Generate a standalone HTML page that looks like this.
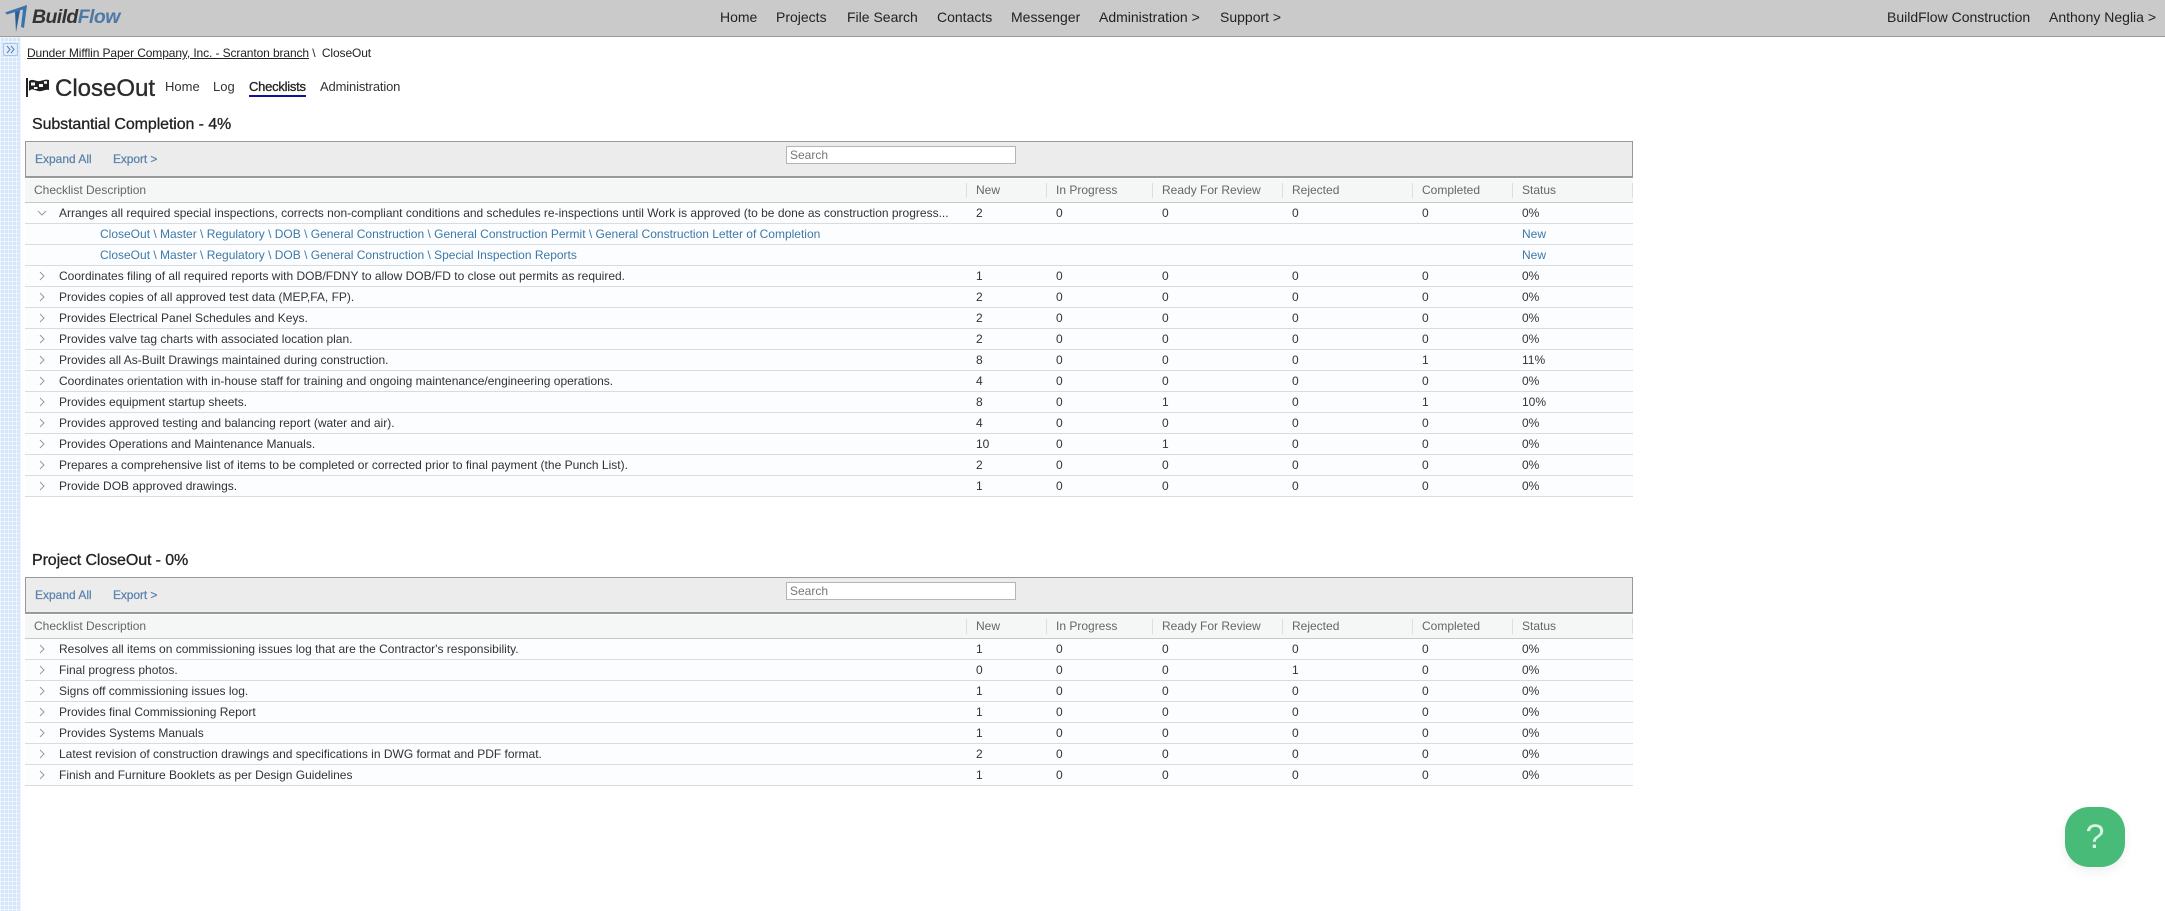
<!DOCTYPE html>
<html><head><meta charset="utf-8"><title>CloseOut</title>
<style>
html,body{margin:0;padding:0;width:2165px;height:911px;overflow:hidden;background:#fff;font-family:"Liberation Sans",Arial,sans-serif;color:#2e2e2e}
.abs,.n,.t{position:absolute;white-space:nowrap}
#top{position:absolute;left:0;top:0;width:2165px;height:36px;background:#cacaca;border-bottom:1px solid #9a9a9a}
.n{top:8px;font-size:14px;line-height:18px;color:#222}
#side{position:absolute;left:0;top:37px;width:21px;height:874px;background-color:#d6e6fa;background-image:linear-gradient(#eef5fe 1px,transparent 1px),linear-gradient(90deg,#eef5fe 1px,transparent 1px);background-size:4px 4px}
#btn{position:absolute;left:3px;top:43px;width:13px;height:11px;background:#e2eefc;border:1px solid #a9c4e6;border-radius:2px}
.sec{position:absolute;left:25px;width:1608px}
.title{position:absolute;left:7px;top:-26px;font-size:16px;line-height:20px;color:#222;white-space:nowrap;letter-spacing:-.1px;-webkit-text-stroke:.3px #222}
.bar{position:absolute;left:0;top:0;width:1606px;height:34px;background:#ececec;border:1px solid #999;border-bottom:2px solid #999}
.lnk{position:absolute;top:10px;font-size:12px;line-height:15px;color:#5b83ad;-webkit-text-stroke:.25px #5b83ad;white-space:nowrap}
.search{position:absolute;left:760px;top:4px;width:228px;height:16px;background:#fff;border:1px solid #b5b5b5;font-size:12px;line-height:16px;color:#777;text-indent:3px}
.head{position:absolute;left:0;top:38px;width:1608px;height:23px;background:#f5f6f6;border-bottom:1px solid #c4c8ca;font-size:12px;color:#666;line-height:23px}
.head i{position:absolute;top:4px;width:1px;height:15px;background:#dcdfe1}
.row{position:absolute;left:0;width:1608px;height:20px;border-bottom:1px solid #d6dde2;background:#fcfdfe;font-size:12px;line-height:21px;color:#333}
.row span{position:absolute;top:0;white-space:nowrap}
.h{left:9px}
.row .d{left:34px}
.row .a,.head .a{left:951px}
.row .b,.head .b{left:1031px}
.row .c,.head .c{left:1137px}
.row .e,.head .e{left:1267px}
.row .f,.head .f{left:1397px}
.row .g,.head .g{left:1497px}
.head span{position:absolute;top:0;white-space:nowrap}
.row .l{left:75px;color:#3d79a8}
.row .g.s{color:#3d79a8}
.row svg{position:absolute;left:12px;top:5px}
.row svg path{fill:none;stroke:#999}
#help{position:absolute;left:2065px;top:807px;width:60px;height:60px;background:#48bb78;border-radius:24px;box-shadow:0 4px 10px rgba(0,0,0,.07);color:#d8f5e3;font-size:34px;line-height:60px;text-align:center}
</style></head><body>

<div id="top"></div>
<svg class="abs" style="left:0;top:0" width="32" height="36" viewBox="0 0 32 36"><path d="M5 12.5 L27 5 L24 28 L21 27 L23 9.5 L7 14.5 Z" fill="#3a72ab"/><path d="M15 12 L20 10.5 L16 32 Z" fill="#2c5e96"/></svg>
<div class="abs" style="left:32px;top:4px;font-size:19.5px;line-height:26px;font-weight:bold;font-style:italic;color:#333;letter-spacing:-.6px">Build<span style="color:#4d79a8">Flow</span></div>
<div class="n" style="left:720px">Home</div>
<div class="n" style="left:776px">Projects</div>
<div class="n" style="left:847px">File Search</div>
<div class="n" style="left:937px">Contacts</div>
<div class="n" style="left:1011px">Messenger</div>
<div class="n" style="left:1099px">Administration &gt;</div>
<div class="n" style="left:1220px">Support &gt;</div>
<div class="n" style="left:1887px">BuildFlow Construction</div>
<div class="n" style="left:2049px">Anthony Neglia &gt;</div>

<div id="side"></div>
<div id="btn"><svg width="13" height="11" viewBox="0 0 13 11" style="display:block"><path d="M3 2l3 3.5L3 9M7 2l3 3.5L7 9" fill="none" stroke="#4f7fb8" stroke-width="1"/></svg></div>

<div class="abs" style="left:27px;top:45px;font-size:12px;line-height:16px;color:#222;letter-spacing:-.11px"><span style="text-decoration:underline">Dunder Mifflin Paper Company, Inc. - Scranton branch</span> \&nbsp; CloseOut</div>

<svg class="abs" style="left:22px;top:74px" width="34" height="30" viewBox="0 0 34 30"><path d="M5 4v19" stroke="#222" stroke-width="2"/><path d="M7 7C11 4 14 8 18 7S24 5 27 6L27 16C23 15 20 18 16 17S10 14 7 17Z" fill="#222"/><path d="M9 8.5h4v3H9zM17 10h4v3h-4zM12 13h3.5v2H12zM22 7.2h3v2.6h-3z" fill="#fff"/></svg>
<div class="abs" style="left:55px;top:73px;font-size:24px;line-height:32px;color:#2b2b2b;-webkit-text-stroke:.35px #2b2b2b">CloseOut</div>
<div class="abs" style="left:165px;top:79px;font-size:13px;line-height:16px;color:#333">Home</div>
<div class="abs" style="left:213px;top:79px;font-size:13px;line-height:16px;color:#333">Log</div>
<div class="abs" style="left:249px;top:79px;font-size:13px;line-height:16px;color:#222;letter-spacing:-.25px;-webkit-text-stroke:.3px #222;border-bottom:2px solid #10109a;padding-bottom:0">Checklists</div>
<div class="abs" style="left:320px;top:79px;font-size:13px;line-height:16px;color:#333;letter-spacing:-.15px">Administration</div>

<div class="sec" style="top:141px">
<div class="title">Substantial Completion - 4%</div>
<div class="bar"><div class="lnk" style="left:9px">Expand All</div><div class="lnk" style="left:87px;letter-spacing:-.1px">Export &gt;</div><div class="search">Search</div></div>
<div class="head"><span class="h">Checklist Description</span><i style="left:941px"></i><span class="a">New</span><i style="left:1021px"></i><span class="b">In Progress</span><i style="left:1127px"></i><span class="c">Ready For Review</span><i style="left:1257px"></i><span class="e">Rejected</span><i style="left:1387px"></i><span class="f">Completed</span><i style="left:1487px"></i><span class="g">Status</span><i style="left:1607px"></i></div>

<div class="row" style="top:62px"><svg width="10" height="10" viewBox="0 0 10 10"><path d="M1 3l4 4 4-4"/></svg><span class="d">Arranges all required special inspections, corrects non-compliant conditions and schedules re-inspections until Work is approved (to be done as construction progress...</span><span class="a">2</span><span class="b">0</span><span class="c">0</span><span class="e">0</span><span class="f">0</span><span class="g">0%</span></div>
<div class="row" style="top:83px"><span class="l">CloseOut \ Master \ Regulatory \ DOB \ General Construction \ General Construction Permit \ General Construction Letter of Completion</span><span class="g s">New</span></div>
<div class="row" style="top:104px"><span class="l">CloseOut \ Master \ Regulatory \ DOB \ General Construction \ Special Inspection Reports</span><span class="g s">New</span></div>
<div class="row" style="top:125px"><svg width="10" height="10" viewBox="0 0 10 10"><path d="M3 1l4 4-4 4"/></svg><span class="d">Coordinates filing of all required reports with DOB/FDNY to allow DOB/FD to close out permits as required.</span><span class="a">1</span><span class="b">0</span><span class="c">0</span><span class="e">0</span><span class="f">0</span><span class="g">0%</span></div>
<div class="row" style="top:146px"><svg width="10" height="10" viewBox="0 0 10 10"><path d="M3 1l4 4-4 4"/></svg><span class="d">Provides copies of all approved test data (MEP,FA, FP).</span><span class="a">2</span><span class="b">0</span><span class="c">0</span><span class="e">0</span><span class="f">0</span><span class="g">0%</span></div>
<div class="row" style="top:167px"><svg width="10" height="10" viewBox="0 0 10 10"><path d="M3 1l4 4-4 4"/></svg><span class="d">Provides Electrical Panel Schedules and Keys.</span><span class="a">2</span><span class="b">0</span><span class="c">0</span><span class="e">0</span><span class="f">0</span><span class="g">0%</span></div>
<div class="row" style="top:188px"><svg width="10" height="10" viewBox="0 0 10 10"><path d="M3 1l4 4-4 4"/></svg><span class="d">Provides valve tag charts with associated location plan.</span><span class="a">2</span><span class="b">0</span><span class="c">0</span><span class="e">0</span><span class="f">0</span><span class="g">0%</span></div>
<div class="row" style="top:209px"><svg width="10" height="10" viewBox="0 0 10 10"><path d="M3 1l4 4-4 4"/></svg><span class="d">Provides all As-Built Drawings maintained during construction.</span><span class="a">8</span><span class="b">0</span><span class="c">0</span><span class="e">0</span><span class="f">1</span><span class="g">11%</span></div>
<div class="row" style="top:230px"><svg width="10" height="10" viewBox="0 0 10 10"><path d="M3 1l4 4-4 4"/></svg><span class="d">Coordinates orientation with in-house staff for training and ongoing maintenance/engineering operations.</span><span class="a">4</span><span class="b">0</span><span class="c">0</span><span class="e">0</span><span class="f">0</span><span class="g">0%</span></div>
<div class="row" style="top:251px"><svg width="10" height="10" viewBox="0 0 10 10"><path d="M3 1l4 4-4 4"/></svg><span class="d">Provides equipment startup sheets.</span><span class="a">8</span><span class="b">0</span><span class="c">1</span><span class="e">0</span><span class="f">1</span><span class="g">10%</span></div>
<div class="row" style="top:272px"><svg width="10" height="10" viewBox="0 0 10 10"><path d="M3 1l4 4-4 4"/></svg><span class="d">Provides approved testing and balancing report (water and air).</span><span class="a">4</span><span class="b">0</span><span class="c">0</span><span class="e">0</span><span class="f">0</span><span class="g">0%</span></div>
<div class="row" style="top:293px"><svg width="10" height="10" viewBox="0 0 10 10"><path d="M3 1l4 4-4 4"/></svg><span class="d">Provides Operations and Maintenance Manuals.</span><span class="a">10</span><span class="b">0</span><span class="c">1</span><span class="e">0</span><span class="f">0</span><span class="g">0%</span></div>
<div class="row" style="top:314px"><svg width="10" height="10" viewBox="0 0 10 10"><path d="M3 1l4 4-4 4"/></svg><span class="d">Prepares a comprehensive list of items to be completed or corrected prior to final payment (the Punch List).</span><span class="a">2</span><span class="b">0</span><span class="c">0</span><span class="e">0</span><span class="f">0</span><span class="g">0%</span></div>
<div class="row" style="top:335px"><svg width="10" height="10" viewBox="0 0 10 10"><path d="M3 1l4 4-4 4"/></svg><span class="d">Provide DOB approved drawings.</span><span class="a">1</span><span class="b">0</span><span class="c">0</span><span class="e">0</span><span class="f">0</span><span class="g">0%</span></div>
</div>

<div class="sec" style="top:577px">
<div class="title">Project CloseOut - 0%</div>
<div class="bar"><div class="lnk" style="left:9px">Expand All</div><div class="lnk" style="left:87px;letter-spacing:-.1px">Export &gt;</div><div class="search">Search</div></div>
<div class="head"><span class="h">Checklist Description</span><i style="left:941px"></i><span class="a">New</span><i style="left:1021px"></i><span class="b">In Progress</span><i style="left:1127px"></i><span class="c">Ready For Review</span><i style="left:1257px"></i><span class="e">Rejected</span><i style="left:1387px"></i><span class="f">Completed</span><i style="left:1487px"></i><span class="g">Status</span><i style="left:1607px"></i></div>
<div class="row" style="top:62px"><svg width="10" height="10" viewBox="0 0 10 10"><path d="M3 1l4 4-4 4"/></svg><span class="d">Resolves all items on commissioning issues log that are the Contractor's responsibility.</span><span class="a">1</span><span class="b">0</span><span class="c">0</span><span class="e">0</span><span class="f">0</span><span class="g">0%</span></div>
<div class="row" style="top:83px"><svg width="10" height="10" viewBox="0 0 10 10"><path d="M3 1l4 4-4 4"/></svg><span class="d">Final progress photos.</span><span class="a">0</span><span class="b">0</span><span class="c">0</span><span class="e">1</span><span class="f">0</span><span class="g">0%</span></div>
<div class="row" style="top:104px"><svg width="10" height="10" viewBox="0 0 10 10"><path d="M3 1l4 4-4 4"/></svg><span class="d">Signs off commissioning issues log.</span><span class="a">1</span><span class="b">0</span><span class="c">0</span><span class="e">0</span><span class="f">0</span><span class="g">0%</span></div>
<div class="row" style="top:125px"><svg width="10" height="10" viewBox="0 0 10 10"><path d="M3 1l4 4-4 4"/></svg><span class="d">Provides final Commissioning Report</span><span class="a">1</span><span class="b">0</span><span class="c">0</span><span class="e">0</span><span class="f">0</span><span class="g">0%</span></div>
<div class="row" style="top:146px"><svg width="10" height="10" viewBox="0 0 10 10"><path d="M3 1l4 4-4 4"/></svg><span class="d">Provides Systems Manuals</span><span class="a">1</span><span class="b">0</span><span class="c">0</span><span class="e">0</span><span class="f">0</span><span class="g">0%</span></div>
<div class="row" style="top:167px"><svg width="10" height="10" viewBox="0 0 10 10"><path d="M3 1l4 4-4 4"/></svg><span class="d">Latest revision of construction drawings and specifications in DWG format and PDF format.</span><span class="a">2</span><span class="b">0</span><span class="c">0</span><span class="e">0</span><span class="f">0</span><span class="g">0%</span></div>
<div class="row" style="top:188px"><svg width="10" height="10" viewBox="0 0 10 10"><path d="M3 1l4 4-4 4"/></svg><span class="d">Finish and Furniture Booklets as per Design Guidelines</span><span class="a">1</span><span class="b">0</span><span class="c">0</span><span class="e">0</span><span class="f">0</span><span class="g">0%</span></div>
</div>

<div id="help">?</div>
</body></html>
